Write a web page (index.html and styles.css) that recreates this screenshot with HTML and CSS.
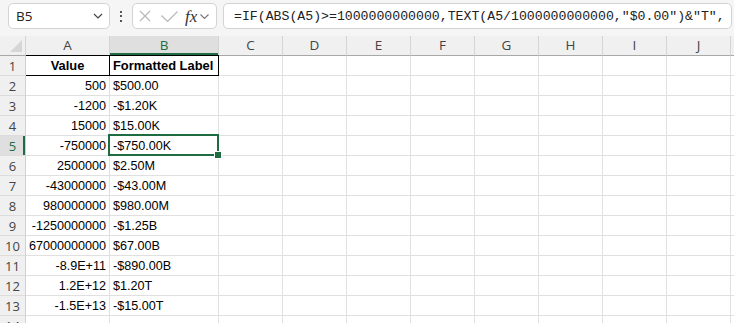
FILE: index.html
```html
<!DOCTYPE html>
<html lang="en">
<head>
    <meta charset="UTF-8">
    <title>Formatted Label</title>
    <link rel="stylesheet" href="styles.css">
</head>
<body>
    <div class="toolbar">
        <div class="namebox">
            <span>B5</span>
            <svg width="10" height="6" viewBox="0 0 10 6"><path d="M1 1l4 4 4-4" fill="none" stroke="#444" stroke-width="1.2"/></svg>
        </div>
        <div class="kebab"><i></i><i></i><i></i></div>
        <div class="fx-group">
            <svg class="fx-cancel" width="12" height="12" viewBox="0 0 12 12"><path d="M1 1l10 10M11 1L1 11" stroke="#b8b8b8" stroke-width="1.2"/></svg>
            <svg class="fx-enter" width="17" height="11" viewBox="0 0 17 11"><path d="M0.5 4.5l6 6 10-10" fill="none" stroke="#b8b8b8" stroke-width="1.2"/></svg>
            <span class="fx-label">fx</span>
            <svg width="9" height="5" viewBox="0 0 9 5"><path d="M0.5 0.5l4 4 4-4" fill="none" stroke="#777" stroke-width="1.1"/></svg>
        </div>
        <div class="formula">=IF(ABS(A5)&gt;=1000000000000,TEXT(A5/1000000000000,"$0.00")&amp;"T",</div>
    </div>

    <div class="sheet" id="sheet"></div>

    <script>
        const cols = ['A', 'B', 'C', 'D', 'E', 'F', 'G', 'H', 'I', 'J', ''];
        const values = ['500', '-1200', '15000', '-750000', '2500000', '-43000000', '980000000',
            '-1250000000', '67000000000', '-8.9E+11', '1.2E+12', '-1.5E+13'];
        const labels = ['$500.00', '-$1.20K', '$15.00K', '-$750.00K', '$2.50M', '-$43.00M', '$980.00M',
            '-$1.25B', '$67.00B', '-$890.00B', '$1.20T', '-$15.00T'];
        const sheet = document.getElementById('sheet');

        function addCell(text, className) {
            const cell = document.createElement('div');
            cell.className = 'cell ' + className;
            cell.textContent = text;
            sheet.appendChild(cell);
            return cell;
        }

        addCell('', 'corner');
        cols.forEach(c => addCell(c, c === 'B' ? 'col-head on' : 'col-head'));

        for (let r = 1; r <= 14; r++) {
            addCell(r, r === 5 ? 'row-head on' : 'row-head');
            if (r === 1) {
                addCell('Value', 'title boxed');
                addCell('Formatted Label', 'title boxed left');
            } else if (r <= 13) {
                addCell(values[r - 2], 'num');
                addCell(labels[r - 2], r === 5 ? 'active' : '');
            } else {
                addCell('', '');
                addCell('', '');
            }
            for (let i = 2; i < cols.length; i++) addCell('', '');
        }
    </script>
</body>
</html>
```

FILE: styles.css
```css
body {
    margin: 0;
    background: #fff;
    width: 734px;
    height: 323px;
    overflow: hidden;
    font-family: 'Liberation Sans', Arial, sans-serif;
}
.toolbar {
    display: flex;
    align-items: flex-start;
    height: 36px;
    box-sizing: border-box;
    padding: 3px 2px 0 8px;
    background: #f5f5f5;
}
.namebox,
.fx-group,
.formula {
    height: 26px;
    box-sizing: border-box;
    background: #fff;
    border: 1px solid #d4d4d4;
    border-radius: 5px;
    display: flex;
    align-items: center;
}
.namebox {
    width: 102px;
    padding: 0 6px 0 7px;
    justify-content: space-between;
    font-family: 'Open Sans', sans-serif;
    font-size: 13.5px;
    color: #222;
}
.kebab {
    width: 22px;
    height: 26px;
    display: flex;
    flex-direction: column;
    align-items: center;
    justify-content: center;
    gap: 2.5px;
}
.kebab i {
    display: block;
    width: 2px;
    height: 2px;
    background: #555;
}
.fx-group {
    width: 85px;
    padding: 0 4px 0 6px;
}
.fx-enter {
    margin-left: 10px;
}
.fx-label {
    margin-left: 7px;
    margin-right: 3px;
    font-family: 'Liberation Serif', serif;
    font-style: italic;
    font-size: 17px;
    color: #333;
    line-height: 1;
}
.formula {
    flex: 1;
    margin-left: 6px;
    padding-left: 10px;
    overflow: hidden;
    white-space: nowrap;
    font-family: 'Liberation Mono', monospace;
    font-size: 13.2px;
    color: #222;
}
.sheet {
    display: grid;
    grid-template-columns: 26px 84px 109px repeat(9, 64px);
    grid-auto-rows: 20px;
    width: 795px;
}
.cell {
    position: relative;
    box-sizing: border-box;
    border-right: 1px solid #e0e0e0;
    border-bottom: 1px solid #e0e0e0;
    padding: 1px 3px 0;
    font-size: 12.6px;
    line-height: 18px;
    color: #000;
    white-space: nowrap;
}
.corner,
.col-head,
.row-head {
    background: #f0f0f0;
    font-family: 'Open Sans', sans-serif;
    font-size: 13px;
    color: #444;
}
.corner {
    border-right-color: #d4d4d4;
    border-bottom-color: #a8a8a8;
}
.corner::after {
    content: '';
    position: absolute;
    right: 3px;
    bottom: 3px;
    border-left: 12px solid transparent;
    border-bottom: 12px solid #d6d6d6;
}
.col-head {
    text-align: center;
    font-size: 13.5px;
    line-height: 19px;
    padding: 0;
    border-right-color: #d4d4d4;
    border-bottom-color: #a8a8a8;
}
.col-head.on {
    background: #dfdfdf;
    color: #1e6c41;
    box-shadow: inset 0 -2px 0 #1e6c41;
}
.row-head {
    text-align: center;
    padding: 1px 0 0;
    border-right-color: #d0d0d0;
    border-bottom-color: #dcdcdc;
}
.row-head.on {
    background: #dfdfdf;
    color: #1e6c41;
    box-shadow: inset -2px 0 0 #1e6c41;
}
.num {
    text-align: right;
}
.title {
    font-weight: bold;
    font-size: 12.9px;
    text-align: center;
}
.title.left {
    text-align: left;
}
.boxed {
    border-right-color: #000;
    border-bottom-color: #000;
    box-shadow: 0 -1px 0 #000;
}
.active::before {
    content: '';
    position: absolute;
    top: -2px;
    left: -2px;
    right: -1px;
    bottom: -1px;
    border: 2px solid #1e6c41;
}
.active::after {
    content: '';
    position: absolute;
    right: -4px;
    bottom: -4px;
    width: 6px;
    height: 6px;
    background: #1e6c41;
    border: 1px solid #fff;
    z-index: 1;
}
```
